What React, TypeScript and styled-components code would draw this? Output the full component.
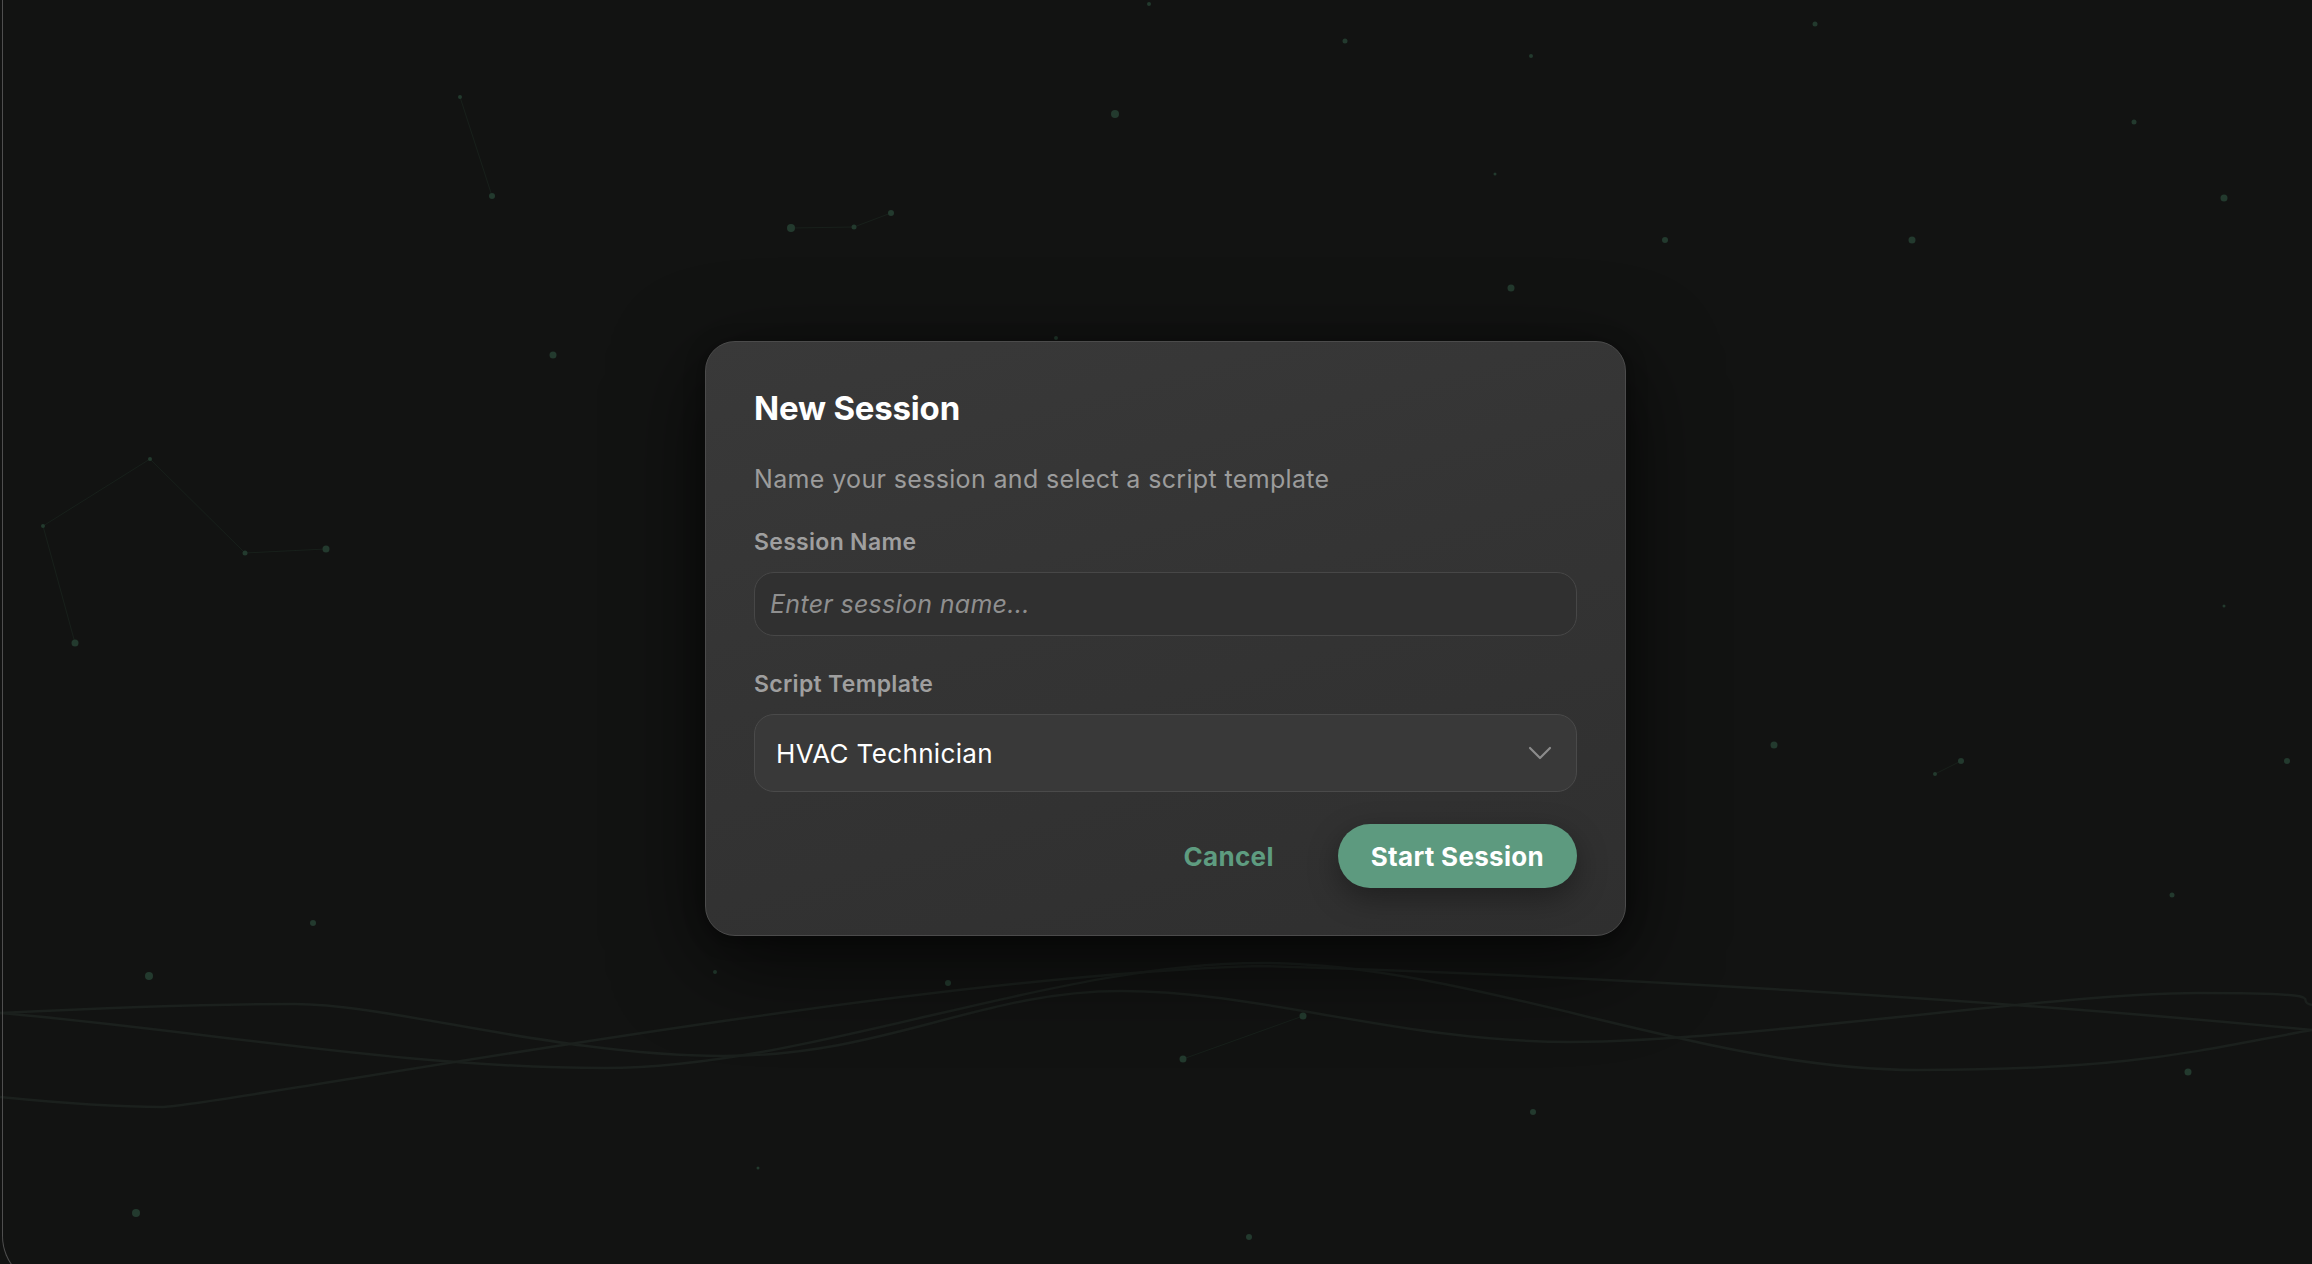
import React from "react";
import styled, { createGlobalStyle } from "styled-components";
import { ChevronDown } from "lucide-react";

const GlobalStyle = createGlobalStyle`
  html, body {
    margin: 0;
    padding: 0;
    background: #121312;
  }
  body {
    font-family: Inter, "Noto Sans", sans-serif;
    -webkit-font-smoothing: antialiased;
  }
  * {
    box-sizing: border-box;
  }
`;

const Page = styled.div`
  position: relative;
  width: 100vw;
  height: 100vh;
  overflow: hidden;
  background: #121312;
  display: flex;
  align-items: center;
  justify-content: center;
  padding: 13px 0 0 19px;
`;

const Backdrop = styled.svg`
  position: absolute;
  inset: 0;
  width: 100%;
  height: 100%;
  pointer-events: none;
`;

const WindowEdge = styled.div`
  position: absolute;
  left: 2px;
  top: -4px;
  bottom: -22px;
  width: 80px;
  border-left: 1px solid #4f4f4f;
  border-bottom: 1px solid #4f4f4f;
  border-bottom-left-radius: 50px;
  pointer-events: none;
`;

const Dialog = styled.div`
  position: relative;
  width: 921px;
  padding: 46px 48px 47px;
  border-radius: 30px;
  border: 1px solid #4b4b4b;
  background: linear-gradient(165deg, #393939 0%, #343434 45%, #2f2f2f 100%);
  box-shadow: 0 24px 90px rgba(0, 0, 0, 0.65), 0 4px 20px rgba(0, 0, 0, 0.35);
  display: flex;
  flex-direction: column;
`;

const Title = styled.h2`
  margin: 0;
  font-size: 33px;
  line-height: 40px;
  font-weight: 700;
  color: #ffffff;
  letter-spacing: -0.2px;
`;

const Subtitle = styled.p`
  margin: 36px 0 0;
  font-size: 25px;
  line-height: 30px;
  font-weight: 400;
  letter-spacing: 0.35px;
  color: #9c9c9c;
`;

const Field = styled.div<{ $top: number }>`
  margin-top: ${({ $top }) => $top}px;
  display: flex;
  flex-direction: column;
  gap: 16px;
`;

const Label = styled.label`
  font-size: 23px;
  line-height: 28px;
  font-weight: 600;
  letter-spacing: 0.3px;
  color: #9f9f9f;
`;

const TextInput = styled.input`
  height: 64px;
  width: 100%;
  padding: 0 15px;
  border-radius: 20px;
  border: 1.5px solid #474747;
  background: #303030;
  color: #ffffff;
  font-family: Inter, "Noto Sans", sans-serif;
  font-size: 25px;
  letter-spacing: 0.3px;
  outline: none;
  &::placeholder {
    color: #8f8f8f;
    font-style: italic;
  }
`;

const Select = styled.div`
  height: 78px;
  width: 100%;
  padding: 0 16px 0 21px;
  border-radius: 20px;
  border: 1.5px solid #4a4a4a;
  background: #393939;
  display: flex;
  align-items: center;
  justify-content: space-between;
  cursor: pointer;
  span {
    font-size: 26px;
    letter-spacing: 0.35px;
    color: #ffffff;
    font-weight: 400;
  }
  svg {
    color: #8c8c8c;
  }
`;

const Actions = styled.div`
  margin-top: 32px;
  display: flex;
  justify-content: flex-end;
  align-items: center;
  gap: 32px;
`;

const Button = styled.button<{ $primary?: boolean }>`
  height: 64px;
  border: none;
  border-radius: 32px;
  font-family: Inter, "Noto Sans", sans-serif;
  font-size: 26px;
  font-weight: 700;
  letter-spacing: 0.3px;
  cursor: pointer;
  padding: ${({ $primary }) => ($primary ? "0 33px" : "0 32px")};
  background: ${({ $primary }) => ($primary ? "#5d9a7f" : "transparent")};
  color: ${({ $primary }) => ($primary ? "#ffffff" : "#5e9c80")};
  box-shadow: ${({ $primary }) => ($primary ? "0 10px 30px rgba(0, 0, 0, 0.35)" : "none")};
`;

const dots: [number, number, number][] = [
  [1149, 4, 2], [1345, 41, 2.5], [1531, 56, 2], [1815, 24, 2.5], [460, 97, 2],
  [1115, 114, 4], [2134, 122, 2.5], [492, 196, 3], [2224, 198, 3.5], [791, 228, 4],
  [854, 227, 2.5], [891, 213, 3], [1665, 240, 3], [1912, 240, 3.5], [1511, 288, 3.5],
  [1495, 174, 1.5], [553, 355, 3.5], [1056, 338, 2], [150, 459, 2], [43, 526, 2],
  [245, 553, 2.5], [326, 549, 3.5], [2224, 606, 1.5], [75, 643, 3.5], [1774, 745, 3.5],
  [1961, 761, 3], [1935, 774, 2], [2287, 761, 3], [313, 923, 3], [149, 976, 4],
  [715, 972, 2], [948, 983, 3], [1303, 1016, 3.5], [1183, 1059, 3.5], [2172, 895, 2.5],
  [2188, 1072, 3.5], [1533, 1112, 3], [758, 1168, 1.5], [136, 1213, 4], [1249, 1237, 3],
];

const links: [number, number, number, number][] = [
  [460, 97, 492, 196],
  [150, 459, 43, 526],
  [43, 526, 75, 643],
  [150, 459, 245, 553],
  [245, 553, 326, 549],
  [791, 228, 854, 227],
  [854, 227, 891, 213],
  [1961, 761, 1935, 774],
  [1303, 1016, 1183, 1059],
];

const Background = () => (
  <Backdrop viewBox="0 0 2312 1264" preserveAspectRatio="none">
    <g fill="none" stroke="#1b201d" strokeWidth="2.5">
      <path d="M0 1013 C200 1030 400 1068 605 1068 S1050 963 1261 963 S1700 1070 1917 1070 S2200 1050 2312 1030" />
      <path d="M0 1013 C100 1008 200 1004 295 1004 S560 1056 723 1056 S980 991 1121 991 S1400 1042 1571 1042 S2050 993 2198 993 S2290 1000 2312 1005" />
      <path d="M0 1097 C60 1103 110 1107 162 1107 S900 975 1261 966 C1600 976 2000 1000 2312 1030" />
    </g>
    <g stroke="#18201b" strokeWidth="1">
      {links.map(([x1, y1, x2, y2], i) => (
        <line key={i} x1={x1} y1={y1} x2={x2} y2={y2} />
      ))}
    </g>
    <g fill="#233a2e">
      {dots.map(([cx, cy, r], i) => (
        <circle key={i} cx={cx} cy={cy} r={r} />
      ))}
    </g>
  </Backdrop>
);

export default function App() {
  return (
    <Page>
      <GlobalStyle />
      <Background />
      <WindowEdge />
      <Dialog>
        <Title>New Session</Title>
        <Subtitle>Name your session and select a script template</Subtitle>
        <Field $top={34}>
          <Label htmlFor="session-name">Session Name</Label>
          <TextInput id="session-name" placeholder="Enter session name..." />
        </Field>
        <Field $top={34}>
          <Label>Script Template</Label>
          <Select role="combobox">
            <span>HVAC Technician</span>
            <ChevronDown size={40} strokeWidth={1.3} />
          </Select>
        </Field>
        <Actions>
          <Button>Cancel</Button>
          <Button $primary>Start Session</Button>
        </Actions>
      </Dialog>
    </Page>
  );
}
